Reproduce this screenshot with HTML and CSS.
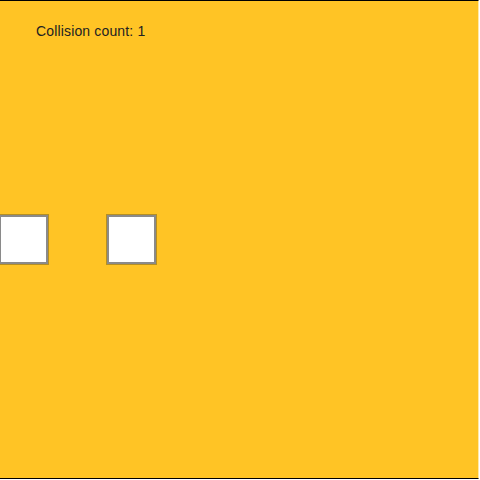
FILE: index.html
```html
<!DOCTYPE html>
<html>
<head>
<meta charset="utf-8">
<link rel="stylesheet" href="styles.css">
</head>
<body>
<div class="stage">
  <div class="label">Collision count: 1</div>
  <div class="track">
    <div class="box box-a"></div>
    <div class="box box-b"></div>
  </div>
</div>
</body>
</html>
```

FILE: styles.css
```css
html, body {
  margin: 0;
  padding: 0;
  width: 480px;
  height: 480px;
  background: #ffffff;
  overflow: hidden;
}
.stage {
  width: 478px;
  height: 477px;
  background: #ffc425;
  border-top: 1px solid #000;
  border-bottom: 1px solid #000;
  border-right: 1px solid #ffe9a8;
  font-family: "Liberation Sans", Arial, sans-serif;
}
.label {
  padding: 22px 0 0 36px;
  font-size: 14px;
  letter-spacing: 0.15px;
  line-height: 16px;
  color: #222;
}
.track {
  display: flex;
  margin-top: 176px;
  gap: 59px;
}
.box {
  width: 45px;
  height: 45px;
  background: #fff;
  border: 2px solid #8a8a8a;
  box-shadow: 0 0 0 1px rgba(90, 80, 30, 0.45);
}
.box-a {
  margin-left: -1px;
}
```
